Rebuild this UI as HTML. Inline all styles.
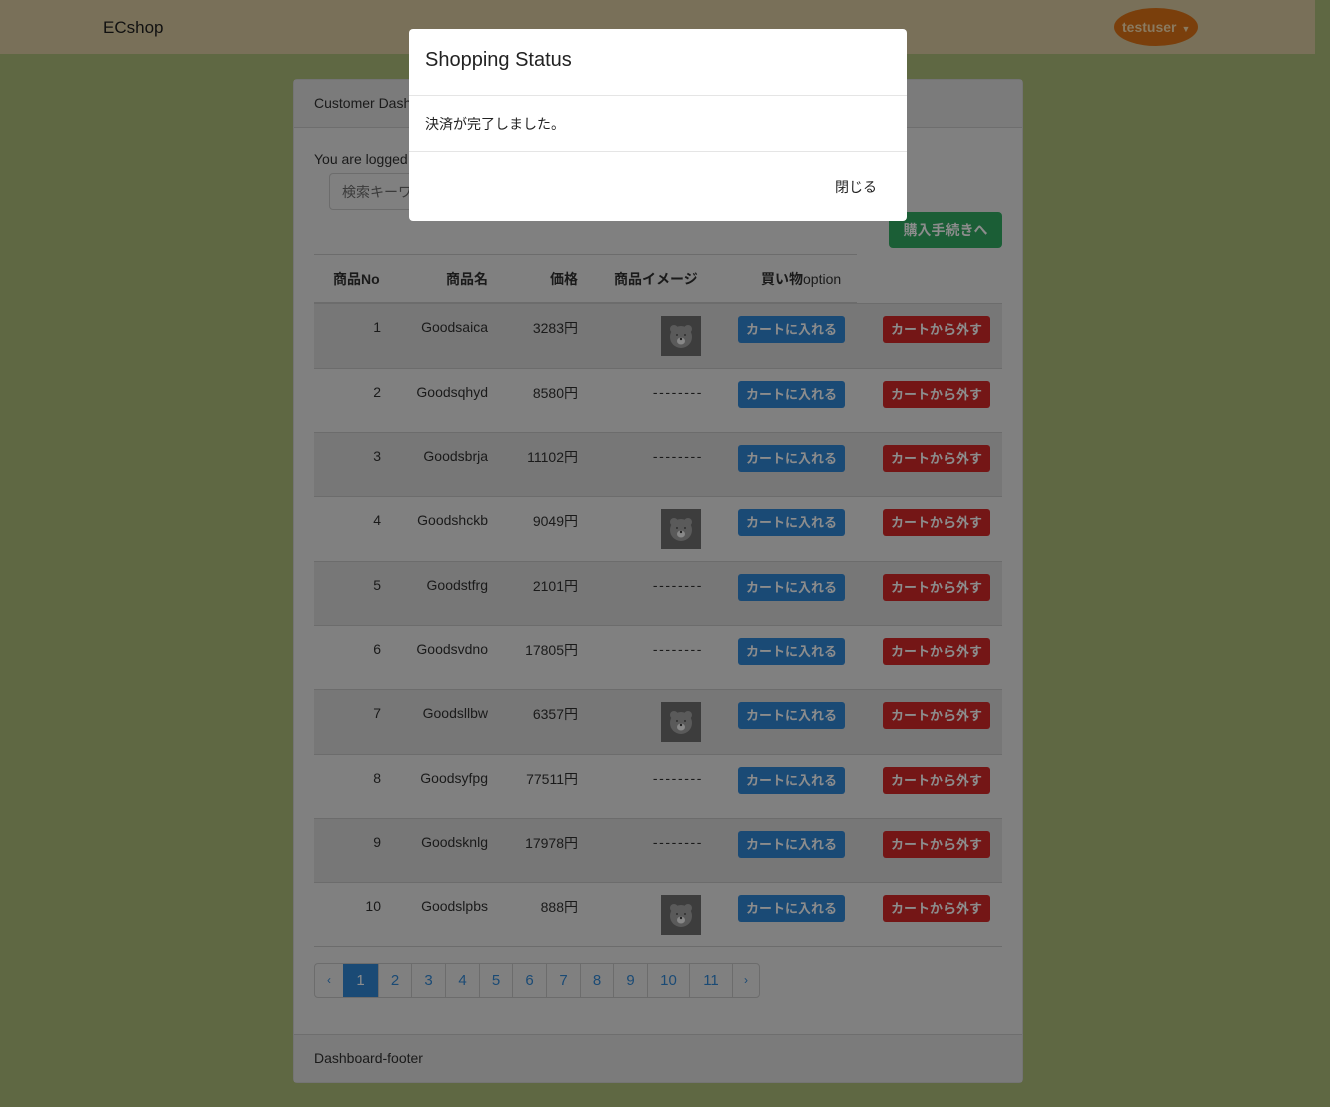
<!DOCTYPE html>
<html><head><meta charset="utf-8">
<style>
*{box-sizing:border-box;margin:0;padding:0}
body{width:1330px;height:1107px;background:#5f6843;font-family:"Liberation Sans","Noto Sans CJK JP",sans-serif;position:relative;overflow:hidden;color:#1a1a1a;font-size:14px}
.abs{position:absolute}
.nav{left:0;top:0;width:1315px;height:54px;background:#797059}
.brand{left:103px;top:18px;font-size:17px;color:#111}
.user{left:1114px;top:8px;width:84px;height:38px;border-radius:50%;background:#7a3f0c;color:#8a7a60;font-weight:bold;font-size:14px;line-height:38px;padding-left:8px}
.user span{font-size:9px;margin-left:5px}
.card{left:293px;top:79px;width:730px;height:1004px;background:#808080;border:1px solid #747474;border-radius:4px}
.chead{left:294px;top:80px;width:728px;height:48px;background:#7b7b7b;border-bottom:1px solid #6e6e6e}
.cfoot{left:294px;top:1034px;width:728px;height:48px;background:#7b7b7b;border-top:1px solid #6e6e6e}
.t{color:#1a1a1a;font-size:14px}
.search{left:329px;top:173px;width:100px;height:37px;border:1px solid #6c6c6c;border-radius:4px;color:#3a3a3a;padding:8px 12px;font-size:14px;white-space:nowrap;overflow:hidden}
.green{left:889px;top:212px;width:113px;height:36px;background:#1b5e36;border-radius:4px;color:#8c8c8c;font-weight:bold;text-align:center;line-height:36px;font-size:14px}
.th{top:269px;font-weight:bold;font-size:14px}
.row{left:314px;width:688px;height:64px;border-top:1px solid #6c6c6c}
.odd{background:#777}
.cell{font-size:14px;text-align:right;white-space:nowrap}
.img{width:40px;height:40px;background:#3d3d3d}
.b{width:107px;height:27px;border-radius:3px;color:#8c8c8c;font-weight:bold;font-size:13px;text-align:center;line-height:27px}
.blue{background:#1a4a75}.red{background:#741616}
.pg{left:314px;top:963px;height:35px;border:1px solid #6c6c6c;border-radius:4px;display:flex;overflow:hidden}
.pg div{height:33px;line-height:33px;text-align:center;color:#1a4a75;border-left:1px solid #6c6c6c;font-size:15px}
.pg div:first-child{border-left:none}
.modal{left:409px;top:29px;width:498px;height:192px;background:#fff;border-radius:4px}
</style></head><body>
<div class="abs nav"></div>
<div class="abs brand">ECshop</div>
<div class="abs user">testuser<span>▼</span></div>
<div class="abs card"></div>
<div class="abs chead"></div>
<div class="abs t" style="left:314px;top:95px">Customer Dashboard</div>
<div class="abs t" style="left:314px;top:151px">You are logged in!</div>
<div class="abs search">検索キーワード</div>
<div class="abs green">購入手続きへ</div>
<div class="abs" style="left:314px;top:254px;width:543px;border-top:1px solid #6c6c6c"></div>
<div class="abs th" style="left:333px">商品No</div>
<div class="abs th" style="left:446px">商品名</div>
<div class="abs th" style="left:550px">価格</div>
<div class="abs th" style="left:614px">商品イメージ</div>
<div class="abs th" style="left:761px">買い物<span style="font-weight:normal">option</span></div>
<div class="abs" style="left:314px;top:302px;width:543px;border-top:2px solid #6c6c6c"></div>

<div id="rows"></div>
<script>
var d=[[1,"Goodsaica","3283",1],[2,"Goodsqhyd","8580",0],[3,"Goodsbrja","11102",0],[4,"Goodshckb","9049",1],[5,"Goodstfrg","2101",0],[6,"Goodsvdno","17805",0],[7,"Goodsllbw","6357",1],[8,"Goodsyfpg","77511",0],[9,"Goodsknlg","17978",0],[10,"Goodslpbs","888",1]];
var tops=[303,368,432,496,561,625,689,754,818,882];
var h="";
d.forEach(function(r,i){var y=tops[i];
h+='<div class="abs row'+(i%2==0?' odd':'')+'" style="top:'+y+'px;height:'+((tops[i+1]||946)-y)+'px"></div>';
h+='<div class="abs cell" style="left:330px;width:51px;top:'+(y+16)+'px">'+r[0]+'</div>';
h+='<div class="abs cell" style="left:390px;width:98px;top:'+(y+16)+'px">'+r[1]+'</div>';
h+='<div class="abs cell" style="left:500px;width:78px;top:'+(y+15)+'px">'+r[2]+'円</div>';
if(r[3])h+='<div class="abs img" style="left:661px;top:'+(y+13)+'px"><svg width="40" height="40"><circle cx="13" cy="13" r="4" fill="#5a5a5a"/><circle cx="27" cy="13" r="4" fill="#5a5a5a"/><circle cx="20" cy="21" r="11" fill="#5a5a5a"/><ellipse cx="20" cy="25" rx="4" ry="3.5" fill="#888"/><circle cx="20" cy="23" r="1.2" fill="#222"/><circle cx="16" cy="19" r="0.9" fill="#222"/><circle cx="24" cy="19" r="0.9" fill="#222"/></svg></div>';
else h+='<div class="abs cell" style="left:640px;width:63px;top:'+(y+16)+'px;letter-spacing:1.6px">--------</div>';
h+='<div class="abs b blue" style="left:738px;top:'+(y+13)+'px">カートに入れる</div>';
h+='<div class="abs b red" style="left:883px;top:'+(y+13)+'px">カートから外す</div>';
});
h+='<div class="abs" style="left:314px;top:946px;width:688px;border-top:1px solid #6c6c6c"></div>';
document.getElementById("rows").innerHTML=h;
</script>

<div class="abs pg">
<div style="width:28px;font-size:12px">‹</div>
<div style="width:35px;background:#1a4a75;color:#8c8c8c;border-left:none">1</div>
<div style="width:33px">2</div><div style="width:34px">3</div><div style="width:34px">4</div><div style="width:33px">5</div><div style="width:34px">6</div><div style="width:34px">7</div><div style="width:33px">8</div><div style="width:34px">9</div><div style="width:42px">10</div><div style="width:43px">11</div>
<div style="width:27px;font-size:12px">›</div>
</div>
<div class="abs cfoot"></div>
<div class="abs t" style="left:314px;top:1050px">Dashboard-footer</div>

<div class="abs modal">
<div style="height:67px;border-bottom:1px solid #e5e5e5;padding:20px 16px;font-size:20px;color:#222">Shopping Status</div>
<div style="height:56px;border-bottom:1px solid #e5e5e5;padding:18px 16px;font-size:14px;color:#222">決済が完了しました。</div>
<div style="text-align:right;padding:25px 30px;font-size:14px;color:#222">閉じる</div>
</div>
</body></html>
